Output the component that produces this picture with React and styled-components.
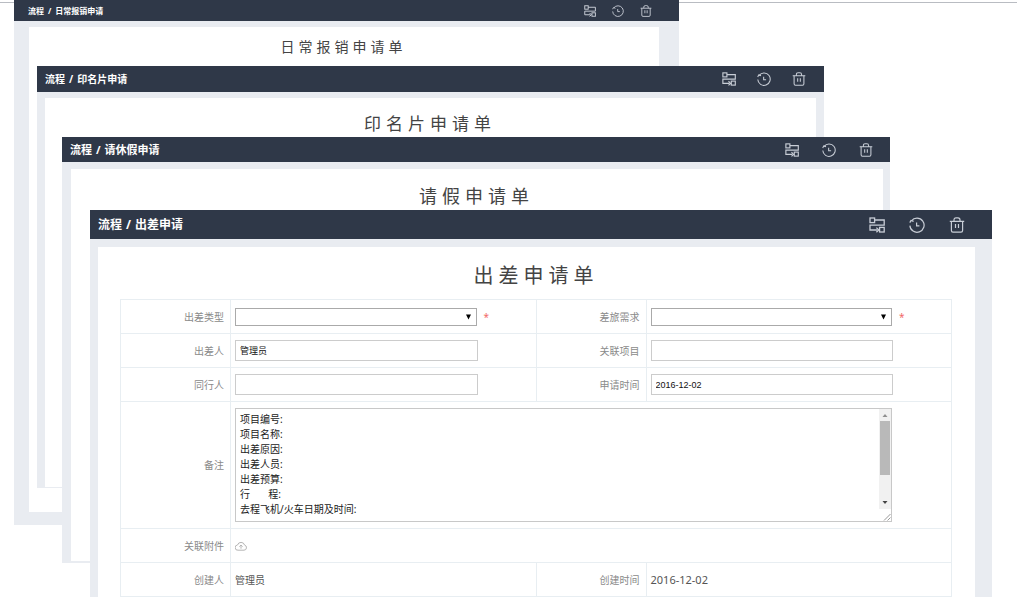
import React from "react";
import styled, { createGlobalStyle } from "styled-components";

const GlobalStyle = createGlobalStyle`
  * { box-sizing: border-box; }
  body {
    margin: 0;
    background: #fff;
    font-family: "Noto Sans", "Noto Sans CJK SC", sans-serif;
    font-size: 10px;
    color: #444;
  }
  button, input, select, textarea { font-family: inherit; margin: 0; }
`;

const Desktop = styled.main`
  position: relative;
  min-height: 100vh;
  overflow: hidden;
  padding-top: 2px;
`;

const TopRule = styled.hr`
  margin: 0;
  border: 0;
  border-top: 1px solid #b9bcc2;
`;

const Window = styled.section`
  position: absolute;
  top: ${(p) => p.$top}px;
  left: ${(p) => p.$left}px;
  right: ${(p) => p.$right}px;
  background: #e9ecf1;
`;

const TitleBar = styled.header`
  display: flex;
  align-items: center;
  justify-content: space-between;
  height: ${(p) => p.$height}px;
  padding: 0 ${(p) => p.$padRight}px 0 ${(p) => p.$padLeft}px;
  background: #2f3848;
`;

const Crumbs = styled.nav`
  display: flex;
  gap: 4px;
  font-size: ${(p) => p.$size}px;
  line-height: 20px;
  font-weight: 700;
  color: #fff;
  white-space: nowrap;
`;

const Tools = styled.div`
  display: flex;
  gap: ${(p) => p.$gap}px;
`;

const IconButton = styled.button`
  display: block;
  padding: 0;
  border: 0;
  background: none;
  color: ${(p) => p.$color || "#c8cdd6"};
  cursor: pointer;

  svg {
    display: block;
    width: ${(p) => p.$size}px;
    height: ${(p) => p.$size}px;
    fill: none;
    stroke: currentColor;
  }
`;

const Frame = styled.div`
  padding: ${(p) => p.$pad};
`;

const Sheet = styled.div`
  min-height: ${(p) => p.$minHeight}px;
  padding: 6px 23px 24px 22px;
  background: #fff;
`;

const SheetTitle = styled.h1`
  margin: 0;
  font-size: ${(p) => p.$size}px;
  line-height: ${(p) => p.$line}px;
  letter-spacing: ${(p) => p.$spacing}px;
  font-weight: 400;
  text-align: center;
  color: #444;
`;

const Form = styled.form`
  border-top: 1px solid #e8eef2;
  border-left: 1px solid #e8eef2;
`;

const Row = styled.div`
  display: grid;
  grid-template-columns: ${(p) =>
    p.$wide ? "110px minmax(0, 1fr)" : "110px minmax(0, 1fr) 110px minmax(0, 1fr)"};
  min-height: ${(p) => (p.$tall ? 127 : 34)}px;
`;

const LabelCell = styled.div`
  display: flex;
  align-items: center;
  justify-content: flex-end;
  padding-right: 6px;
  border-right: 1px solid #e8eef2;
  border-bottom: 1px solid #e8eef2;
  line-height: 16px;
  color: #8a8a8a;
`;

const FieldCell = styled.div`
  display: grid;
  grid-template-columns: minmax(0, 1fr) 52px;
  column-gap: 6px;
  align-items: center;
  padding-left: 4px;
  border-right: 1px solid #e8eef2;
  border-bottom: 1px solid #e8eef2;
`;

const TextInput = styled.input`
  width: 100%;
  height: 21px;
  padding: 0 4px;
  border: 1px solid #ccc;
  background: #fff;
  font-family: "Liberation Sans", "Noto Sans CJK SC", sans-serif;
  font-size: 9px;
  color: #111;
`;

const SelectBox = styled.div`
  display: grid;
  grid-template-columns: minmax(0, 1fr) 10px;
  align-items: center;
  margin-right: 1px;
  border: 1px solid #aaa;
  background: #fff;

  svg { width: 5px; height: 6px; grid-area: 1 / 2; pointer-events: none; }
`;

const Select = styled.select`
  grid-area: 1 / 1 / 2 / 3;
  width: 100%;
  height: 16px;
  padding: 0 4px;
  border: 0;
  appearance: none;
  background: transparent;
  font-size: 9px;
`;

const Required = styled.span`
  font-size: 10px;
  line-height: 16px;
  color: #f26a67;
`;

const Value = styled.span`
  font-size: ${(p) => (p.$latin ? 11 : 10)}px;
  line-height: 16px;
  color: #555;
`;

const MemoBox = styled.div`
  display: grid;
  grid-template-columns: minmax(0, 1fr) 12px;
  height: 114px;
  margin-right: 1px;
  border: 1px solid #c8c8c8;
`;

const Memo = styled.textarea`
  height: 112px;
  padding: 3px 4px;
  border: 0;
  resize: none;
  overflow: hidden;
  background: #fff;
  font-size: 10px;
  line-height: 15px;
  color: #222;
`;

const Scrollbar = styled.div`
  display: flex;
  flex-direction: column;
  align-items: center;
  background: #f1f1f1;

  svg { display: block; width: 12px; height: 12px; }
`;

const Thumb = styled.div`
  width: 10px;
  height: 54px;
  margin-bottom: auto;
  background: #b9b9b9;
`;

function FlowIcon() {
  return (
    <svg viewBox="0 0 16 16" strokeWidth="1.3" aria-hidden="true">
      <rect x="1" y="1" width="4.6" height="4.6" />
      <path d="M5.6 3H15.2V8.2H1V13H8.5" />
      <path d="M7.4 10.6 9.8 13 7.4 15.2" />
      <rect x="10.6" y="10.4" width="4.6" height="4.6" />
    </svg>
  );
}

function HistoryIcon() {
  return (
    <svg viewBox="0 0 16 16" strokeWidth="1.2" aria-hidden="true">
      <path d="M2.4 3.8A7.1 7.1 0 1 1 0.9 8.6" />
      <path d="M0.8 5.6 2 3.4 4.6 4.4" />
      <path d="M7.6 5.4V8.8H10.4" />
    </svg>
  );
}

function TrashIcon() {
  return (
    <svg viewBox="0 0 16 16" strokeWidth="1.2" aria-hidden="true">
      <path d="M0.8 4.3H15.2M5 4.3V3Q5 0.8 7 0.8H9Q11 0.8 11 3V4.3" />
      <path d="M2.4 4.3V13.5Q2.4 15.2 4 15.2H12Q13.6 15.2 13.6 13.5V4.3M6.5 7V11M9.5 7V11" />
    </svg>
  );
}

function CloudIcon() {
  return (
    <svg viewBox="0 0 12 12" aria-hidden="true">
      <path d="M3 10.2H9A2.6 2.6 0 0 0 9.6 5.1 3.7 3.7 0 0 0 2.5 5 2.6 2.6 0 0 0 3 10.2ZM6 8.7V5.2M4.4 6.6 6 5 7.6 6.6" />
    </svg>
  );
}

function FormWindow({ spec, children }) {
  const tools = [
    ["流程图", FlowIcon],
    ["历史", HistoryIcon],
    ["删除", TrashIcon],
  ];
  return (
    <Window $top={spec.top} $left={spec.left} $right={spec.right}>
      <TitleBar $height={spec.bar} $padLeft={spec.barLeft} $padRight={spec.barRight}>
        <Crumbs $size={spec.crumb}>
          <span>流程</span>
          <span>/</span>
          <span>{spec.name}</span>
        </Crumbs>
        <Tools $gap={spec.gap}>
          {tools.map(([label, Icon]) => (
            <IconButton key={label} type="button" aria-label={label} $size={spec.icon}>
              <Icon />
            </IconButton>
          ))}
        </Tools>
      </TitleBar>
      <Frame $pad={spec.pad}>
        <Sheet $minHeight={spec.sheet}>
          <SheetTitle $size={spec.title} $line={spec.line} $spacing={spec.spacing}>
            {spec.heading}
          </SheetTitle>
          {children}
        </Sheet>
      </Frame>
    </Window>
  );
}

function Label({ id, children }) {
  return (
    <LabelCell>
      <label htmlFor={id}>{children}</label>
    </LabelCell>
  );
}

function TextField({ id, label, value = "" }) {
  return (
    <>
      <Label id={id}>{label}</Label>
      <FieldCell>
        <TextInput id={id} type="text" defaultValue={value} />
      </FieldCell>
    </>
  );
}

function SelectField({ id, label }) {
  return (
    <>
      <Label id={id}>{label}</Label>
      <FieldCell>
        <SelectBox>
          <Select id={id} required>
            <option value="" />
          </Select>
          <svg viewBox="0 0 5 6" aria-hidden="true">
            <path d="M0 0.5H5L2.5 5.5Z" fill="#000" />
          </svg>
        </SelectBox>
        <Required>*</Required>
      </FieldCell>
    </>
  );
}

const windows = [
  {
    name: "日常报销申请", heading: "日常报销申请单",
    top: 0, left: 14, right: 338, bar: 21, barLeft: 14, barRight: 27,
    crumb: 8, icon: 12, gap: 16, pad: "6px 20px 13px 15px", sheet: 485,
    title: 14, line: 28, spacing: 4,
  },
  {
    name: "印名片申请", heading: "印名片申请单",
    top: 66, left: 37, right: 193, bar: 26, barLeft: 8, barRight: 18,
    crumb: 10, icon: 14, gap: 21, pad: "6px 8px 1px 8px", sheet: 389,
    title: 17, line: 40, spacing: 5,
  },
  {
    name: "请休假申请", heading: "请假申请单",
    top: 137, left: 62, right: 127, bar: 25, barLeft: 8, barRight: 17,
    crumb: 11, icon: 14, gap: 23, pad: "7px 7px 2px 9px", sheet: 392,
    title: 18, line: 42, spacing: 5,
  },
];

const tripWindow = {
  name: "出差申请", heading: "出差申请单",
  top: 210, left: 90, right: 25, bar: 29, barLeft: 8, barRight: 27,
  crumb: 12, icon: 16, gap: 24, pad: "8px 17px 8px 8px", sheet: 350,
  title: 20, line: 46, spacing: 5,
};

const memoText = [
  "项目编号:",
  "项目名称:",
  "出差原因:",
  "出差人员:",
  "出差预算:",
  "行       程:",
  "去程飞机/火车日期及时间:",
].join("\n");

export default function App() {
  return (
    <>
      <GlobalStyle />
      <Desktop>
        <TopRule />
        {windows.map((spec) => (
          <FormWindow key={spec.name} spec={spec} />
        ))}
        <FormWindow spec={tripWindow}>
          <Form>
            <Row>
              <SelectField id="trip-type" label="出差类型" />
              <SelectField id="trip-need" label="差旅需求" />
            </Row>
            <Row>
              <TextField id="traveller" label="出差人" value="管理员" />
              <TextField id="project" label="关联项目" />
            </Row>
            <Row>
              <TextField id="companion" label="同行人" />
              <TextField id="apply-date" label="申请时间" value="2016-12-02" />
            </Row>
            <Row $wide $tall>
              <Label id="memo">备注</Label>
              <FieldCell>
                <MemoBox>
                  <Memo id="memo" defaultValue={memoText} />
                  <Scrollbar aria-hidden="true">
                    <svg viewBox="0 0 12 12">
                      <path d="M3.5 8H8.5L6 5Z" fill="#8f8f8f" />
                    </svg>
                    <Thumb />
                    <svg viewBox="0 0 12 12">
                      <path d="M3.5 4H8.5L6 7Z" fill="#444" />
                    </svg>
                    <svg viewBox="0 0 12 12">
                      <rect width="12" height="12" fill="#fff" />
                      <path d="M5 11.5 11.5 5M8.5 11.5 11.5 8.5" stroke="#999" fill="none" />
                    </svg>
                  </Scrollbar>
                </MemoBox>
              </FieldCell>
            </Row>
            <Row $wide>
              <LabelCell>关联附件</LabelCell>
              <FieldCell>
                <IconButton type="button" aria-label="上传附件" $size={12} $color="#b5b5b5">
                  <CloudIcon />
                </IconButton>
              </FieldCell>
            </Row>
            <Row>
              <LabelCell>创建人</LabelCell>
              <FieldCell>
                <Value>管理员</Value>
              </FieldCell>
              <LabelCell>创建时间</LabelCell>
              <FieldCell>
                <Value $latin>2016-12-02</Value>
              </FieldCell>
            </Row>
          </Form>
        </FormWindow>
      </Desktop>
    </>
  );
}
